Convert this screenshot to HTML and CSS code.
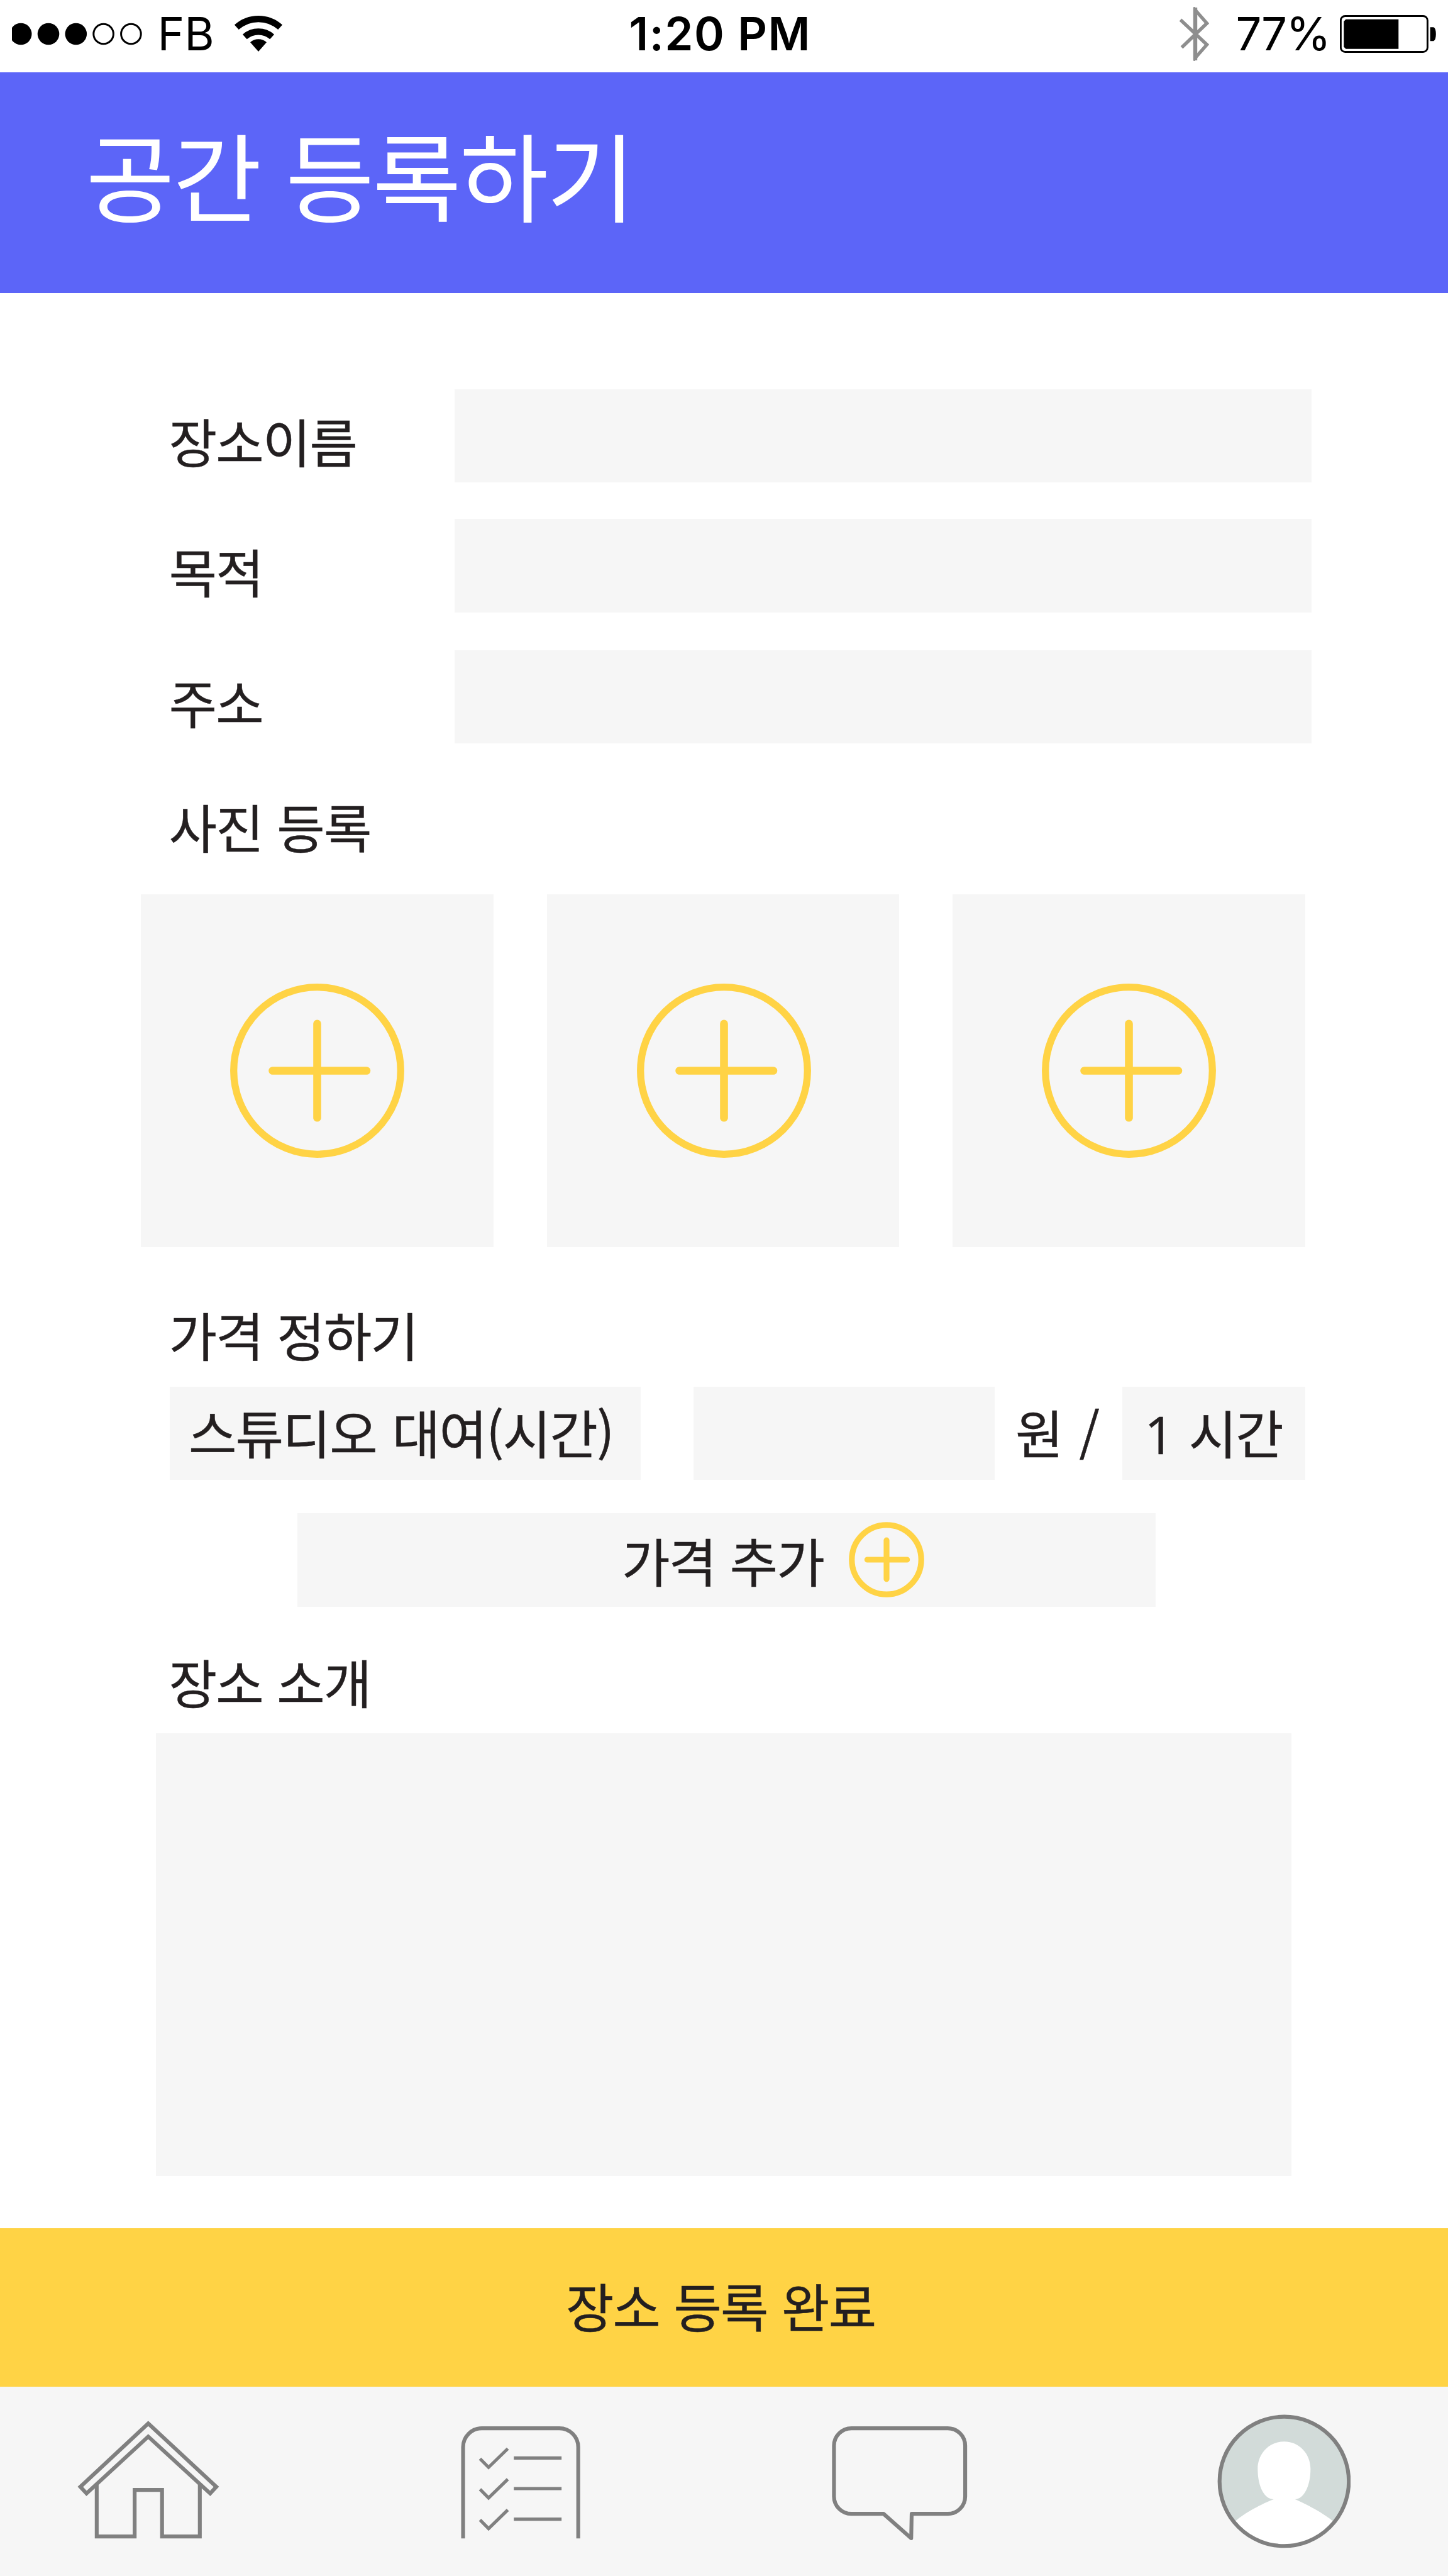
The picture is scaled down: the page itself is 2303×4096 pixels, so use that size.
FILE: index.html
```html
<!DOCTYPE html>
<html lang="ko">
<head>
<meta charset="utf-8">
<title>공간 등록하기</title>
<link rel="stylesheet" href="styles.css">
</head>
<body>
<svg class="defs" aria-hidden="true">
  <symbol id="plus" viewBox="0 0 277 277">
    <circle cx="138.5" cy="138.5" r="132.8" fill="none" stroke="#ffd345" stroke-width="11.3"/>
    <path d="M138.5 63.7V213.3M67.5 138.5H217" fill="none" stroke="#ffd345" stroke-width="12.6" stroke-linecap="round"/>
  </symbol>
  <symbol id="plus-small" viewBox="0 0 120 120">
    <circle cx="60" cy="60" r="55.2" fill="none" stroke="#ffd345" stroke-width="9.2"/>
    <path d="M60 29.2V90.8M29.4 60H92.6" fill="none" stroke="#ffd345" stroke-width="9.2" stroke-linecap="round"/>
  </symbol>
</svg>
<div class="screen">
  <div class="status">
    <div class="status-left">
      <svg class="signal" viewBox="0 0 210 36">
        <circle cx="14.2" cy="18" r="17.3"/>
        <circle cx="58" cy="18" r="17.3"/>
        <circle cx="101.8" cy="18" r="17.3"/>
        <circle class="ring" cx="145.6" cy="18" r="15.8"/>
        <circle class="ring" cx="189.4" cy="18" r="15.8"/>
      </svg>
      <span class="carrier">FB</span>
      <svg class="wifi" viewBox="0 0 78 60">
        <path d="M39 59L26 44.2A19.5 19.5 0 0 1 52 44.2Z"/>
        <path class="arc" d="M17.3 35.5A33 33 0 0 1 60.7 35.5M4.3 20.3A52 52 0 0 1 73.7 20.3"/>
      </svg>
    </div>
    <span class="clock">1:20 PM</span>
    <div class="status-right">
      <svg class="bluetooth" viewBox="0 0 48 86">
        <path d="M2.5 20.5L44.5 60L26 81V5L44.5 26L4.5 64.5" stroke-width="5.4"/>
        <path d="M26 1V85" stroke-width="6.4"/>
      </svg>
      <span class="percent">77%</span>
      <svg class="battery" viewBox="0 0 153 60">
        <rect x="1.4" y="1.5" width="138" height="57" rx="7" fill="none" stroke="#000" stroke-width="2.9"/>
        <path d="M9.5 6.7H93.3V53.7H9.5L6.3 50.5V10Z"/>
        <path d="M143.6 19.3H149Q152.8 21 152.8 30.3T149 41.2H143.6Z"/>
      </svg>
    </div>
  </div>
  <header class="header"><h1 class="title">공간 등록하기</h1></header>
  <main class="form">
    <div class="fields">
      <div class="field"><label class="label" for="name">장소이름</label><input class="input" id="name"></div>
      <div class="field"><label class="label" for="purpose">목적</label><input class="input" id="purpose"></div>
      <div class="field field-last"><label class="label" for="address">주소</label><input class="input" id="address"></div>
    </div>
    <h2 class="heading photos-heading">사진 등록</h2>
    <div class="photos">
      <div class="photo"><svg class="plus"><use href="#plus"/></svg></div>
      <div class="photo photo-middle"><svg class="plus"><use href="#plus"/></svg></div>
      <div class="photo"><svg class="plus"><use href="#plus"/></svg></div>
    </div>
    <h2 class="heading price-heading">가격 정하기</h2>
    <div class="price">
      <div class="price-name"><span>스튜디오 대여(시간)</span></div>
      <input class="input price-value" aria-label="가격">
      <span class="won">원 /</span>
      <div class="price-unit"><span class="count">1 시간</span></div>
    </div>
    <div class="add"><span class="add-text">가격 추가</span><svg class="add-icon"><use href="#plus-small"/></svg></div>
    <h2 class="heading about-heading">장소 소개</h2>
    <textarea class="about" aria-label="장소 소개"></textarea>
  </main>
  <div class="submit"><span>장소 등록 완료</span></div>
  <nav class="nav">
    <svg class="home" viewBox="200 260 920 880">
      <path d="M659 327L219.5 737L259.500 780L659 412L1060 780L1100 737ZM325.500 715V1058.500H571V757H748.500V1058.500H993V715"/>
    </svg>
    <svg class="list" viewBox="280 260 780 880">
      <path d="M298.500 1071V480A122 122 0 0 1 420 358H922A122 122 0 0 1 1044 480V1071"/>
      <path stroke-width="21" d="M408 555L463.500 611L588 490M627 550.500H936M408 753L463.500 809L588 688M627 748.500H936M408 951L463.500 1007L588 886M627 946.500H936"/>
    </svg>
    <svg class="chat" viewBox="280 260 885 880">
      <path stroke-linejoin="round" d="M412 358H1034A113 113 0 0 1 1147.500 471V799A113 113 0 0 1 1034 912H801L798 1070L619 912H412A113 113 0 0 1 298 799V471A113 113 0 0 1 412 358Z"/>
    </svg>
    <svg class="avatar" viewBox="230 260 866 880">
      <clipPath id="face"><circle cx="663.500" cy="701.500" r="418"/></clipPath>
      <circle cx="663.500" cy="701.500" r="418" fill="#d2dbd9" stroke="none"/>
      <path clip-path="url(#face)" fill="#fff" stroke="none" d="M663 444C765 444 834 528 834 620C834 738 788 816 733 818C800 845 930 915 982 962L1000 1140H330L345 962C398 911 527 843 596 818C536 816 492 738 492 620C492 528 561 444 663 444Z"/>
      <circle cx="663.500" cy="701.500" r="418.500"/>
    </svg>
  </nav>
</div>
</body>
</html>
```
FILE: styles.css
```css
* { box-sizing: border-box; }
body { margin: 0; background: #fff; }
.defs { display: none; }
.screen {
  width: 2303px;
  height: 4096px;
  display: flex;
  flex-direction: column;
  overflow: hidden;
  background: #fff;
  color: #231f20;
  font-family: "Noto Sans CJK KR", sans-serif;
  font-size: 83px;
  line-height: 80px;
  letter-spacing: -1.8px;
  word-spacing: 1px;
  white-space: nowrap;
}
svg { display: block; flex: none; }

.status {
  height: 114.5px;
  flex: none;
  display: grid;
  grid-template-columns: 1000.5px 1fr 1003px;
  align-items: start;
  font-family: Inter, sans-serif;
  font-size: 72.6px;
  line-height: 88px;
  letter-spacing: 0;
  word-spacing: 0;
  color: #000;
}
.status-left, .status-right { display: flex; align-items: flex-start; }
.status-left { padding-left: 18.8px; }
.signal { width: 210px; height: 36px; margin-top: 36.2px; }
.ring { fill: none; stroke: #000; stroke-width: 3; }
.carrier { width: 88px; margin: 10.3px 0 0 21.6px; }
.wifi { width: 78px; height: 60px; margin: 23px 0 0 33.6px; }
.arc { fill: none; stroke: #000; stroke-width: 10.2; }
.clock { margin-top: 10.3px; font-weight: 600; letter-spacing: 1.5px; }
.status-right { justify-content: flex-end; padding-right: 18.6px; }
.bluetooth { width: 48px; height: 86px; margin-top: 11.3px; fill: none; stroke: #8e8e8e; }
.percent { width: 166px; margin: 10.3px 0 0 42px; letter-spacing: -1.8px; }
.battery { width: 153px; height: 60px; margin-top: 24.2px; }

.header {
  height: 351px;
  flex: none;
  display: flex;
  align-items: center;
  padding: 0 0 29.5px 136.6px;
  background: #5c65f8;
  color: #fff;
}
.title { margin: 0; font-size: 153.5px; line-height: 150px; font-weight: 400; letter-spacing: -2.7px; word-spacing: 0; }

.form { height: 3077.2px; flex: none; padding-top: 153.5px; -webkit-text-stroke: 0.5px #231f20; }
.fields { display: flex; flex-direction: column; gap: 58px; padding: 0 217px 0 268.8px; }
.field { display: flex; height: 148.4px; }
.field-last { margin-top: 2px; }
.label { width: 453.9px; padding-top: 41.2px; }
.input { flex: 1; min-width: 0; border: 0; padding: 0 30px; background: #f6f6f6; font: inherit; }
.heading { margin: 0 0 0 268.8px; font-size: 83px; line-height: 80px; font-weight: 400; }
.photos-heading { padding-top: 90.6px; }
.photos { display: flex; gap: 84.6px; margin: 69.6px 0 0 224.2px; }
.photo { width: 560.8px; height: 560.4px; display: flex; align-items: center; justify-content: center; background: #f6f6f6; }
.photo-middle { padding-left: 3px; }
.plus { width: 277px; height: 277px; }
.price-heading { padding-top: 98.4px; }
.price { display: flex; height: 148.7px; margin: 43.6px 0 0 270px; }
.price-name { width: 749px; padding: 31.7px 0 0 30px; letter-spacing: -1.6px; word-spacing: 3px; background: #f6f6f6; }
.price-value { flex: none; width: 479px; margin-left: 84.4px; }
.won { width: 202.9px; padding: 31.7px 0 0 32.6px; word-spacing: 5.5px; }
.price-unit { width: 290.8px; padding: 31.7px 0 0 35px; word-spacing: 5px; background: #f6f6f6; }
.count { font-family: "Open Sans", "Noto Sans CJK KR", sans-serif; }
.add { display: flex; align-items: center; width: 1365px; height: 148.6px; margin: 52.7px 0 0 472.8px; padding-left: 516.5px; background: #f6f6f6; }
.add-text { width: 361px; }
.add-icon { width: 120px; height: 120px; }
.about-heading { padding-top: 77.8px; }
.about { display: block; width: 1806px; height: 704px; margin: 43.9px 0 0 248px; border: 0; padding: 30px; background: #f6f6f6; font: inherit; resize: none; }

.submit { height: 252.6px; flex: none; padding: 82.5px 0 0 900px; background: #ffd345; -webkit-text-stroke: 0.5px #231f20; }

.nav { flex: 1; display: flex; padding: 41.8px 0 0 122.8px; background: #f6f6f6; fill: none; stroke: #808080; stroke-width: 25; }
.nav svg { height: 216.2px; }
.nav .home { width: 226px; margin-right: 383.2px; }
.nav .list { width: 191.6px; margin-right: 398px; }
.nav .chat { width: 217.4px; margin-right: 396.7px; }
.nav .avatar { width: 212.7px; }
```
